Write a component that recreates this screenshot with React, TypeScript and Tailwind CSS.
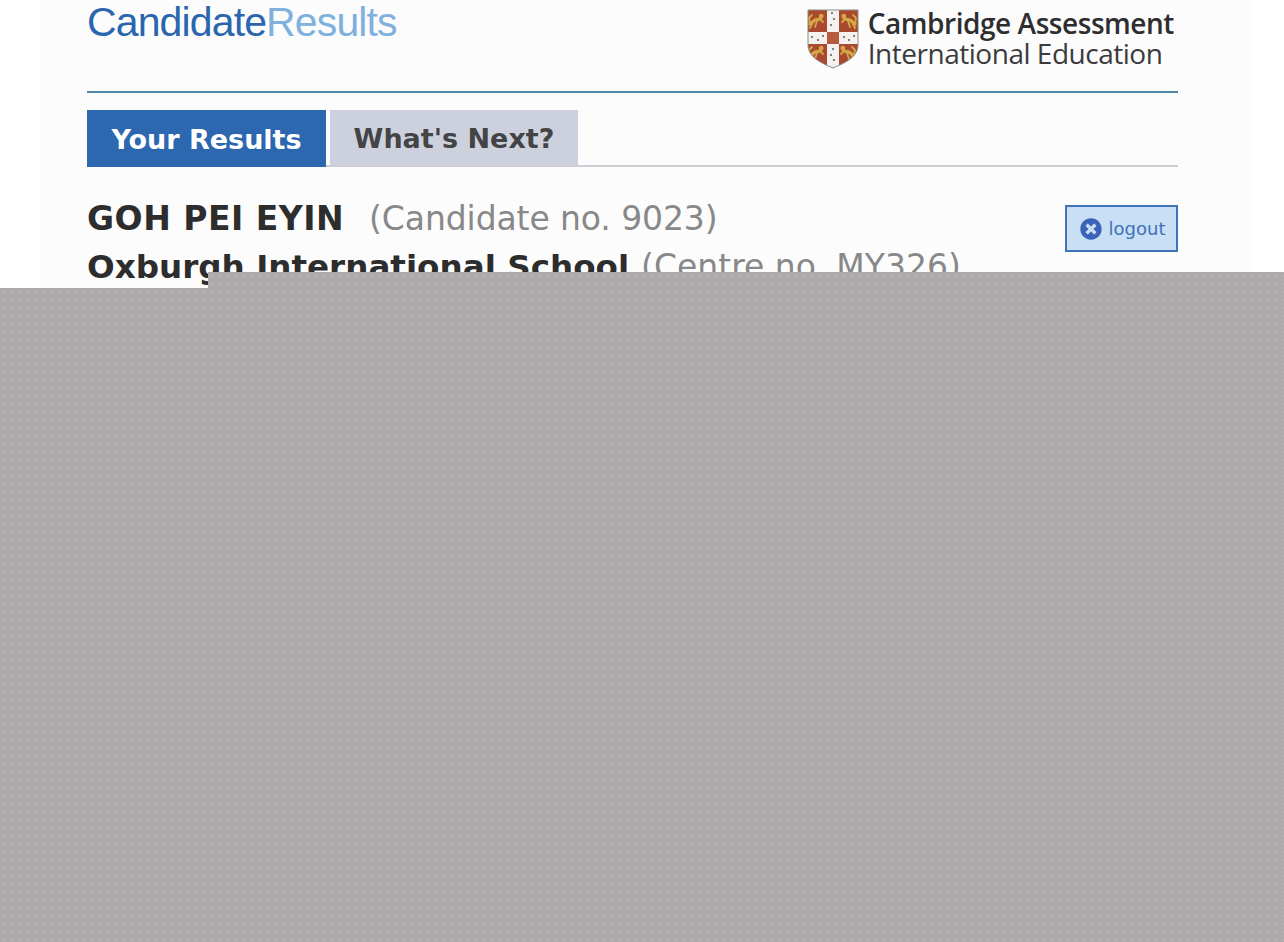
import React from "react";
import { FaTimesCircle } from "react-icons/fa";

function Lion({ x, y, flip }: { x: number; y: number; flip?: boolean }) {
  return (
    <g transform={`translate(${x} ${y}) ${flip ? "scale(-1 1)" : ""}`} fill="none" stroke="#d5aa45" strokeLinecap="round" strokeLinejoin="round">
      <path d="M-6 3 L-1 -1 L4 -2 L6 -5" strokeWidth="3.2" />
      <path d="M-4 3 L-6 7 M1 0 L-1 6 M4 -2 L7 1 M-6 3 L-7 -3 L-4 -6" strokeWidth="1.8" />
      <circle cx="5" cy="-5" r="2.2" fill="#d5aa45" stroke="none" />
    </g>
  );
}

function Shield() {
  return (
    <svg width="52" height="60" viewBox="0 0 52 60" className="shrink-0">
      <defs>
        <clipPath id="shield">
          <path d="M1 1 H51 V36 C51 48 38 54 26 59 C14 54 1 48 1 36 Z" />
        </clipPath>
      </defs>
      <g clipPath="url(#shield)">
        <rect width="52" height="60" fill="#a9492f" />
        <rect x="20" width="12" height="60" fill="#f4f1ee" />
        <rect y="23" width="52" height="12" fill="#f4f1ee" />
        <rect x="20" y="23" width="12" height="12" fill="#b85a3c" />
        {[[25, 4], [27, 10], [24, 16], [26, 40], [24, 46], [27, 51], [5, 28], [11, 31], [16, 27], [37, 28], [42, 31], [47, 27]].map(([x, y], i) => (
          <circle key={i} cx={x} cy={y} r="1" fill="#5a5a5a" />
        ))}
        <Lion x={9} y={12} />
        <Lion x={42} y={12} flip />
        <Lion x={9} y={44} />
        <Lion x={41} y={44} flip />
      </g>
      <path d="M1 1 H51 V36 C51 48 38 54 26 59 C14 54 1 48 1 36 Z" fill="none" stroke="#8d8d8d" strokeWidth="1" />
    </svg>
  );
}

const dots =
  "bg-[#acaaab] bg-[radial-gradient(circle,#bcbbbb_0.6px,transparent_1px)] bg-[length:8px_8px]";

export default function App() {
  return (
    <div className="relative h-[942px] overflow-hidden bg-white font-['DejaVu_Sans',sans-serif]">
      <div className="ml-[40px] mr-[32px] h-full bg-[#fcfcfd] pl-[47px] pr-[74px]">
        <header className="flex h-[93px] justify-between border-b-2 border-[#4f86a6]">
          <div className="font-['Liberation_Sans',sans-serif] text-[41px] leading-[44px] tracking-[-0.87px]">
            <span className="text-[#2a66ad]">Candidate</span>
            <span className="text-[#80b1dd]">Results</span>
          </div>
          <div className="mr-[4px] mt-[9px] flex items-start gap-[9px]">
            <Shield />
            <div className="mt-[-2px] font-['Open_Sans',sans-serif] text-[#2e2e30]">
              <div className="text-[28px] font-semibold leading-[32px] tracking-[-0.45px]">Cambridge Assessment</div>
              <div className="text-[28px] leading-[28px] tracking-[-0.48px] text-[#3b3b3d]">International Education</div>
            </div>
          </div>
        </header>

        <nav className="mt-[17px] flex h-[57px] gap-[4px] border-b-2 border-[#ccced2]">
          <div className="-mb-[2px] flex h-[57px] w-[239px] items-center justify-center bg-[#2c67b0] pt-[4px] text-[27px] font-bold text-white">
            Your Results
          </div>
          <div className="flex h-[55px] w-[248px] items-center justify-center bg-[#cdd1dd] pt-[4px] text-[27px] font-bold text-[#444446]">
            What's Next?
          </div>
        </nav>

        <section className="mt-[28px] flex items-start justify-between">
          <div>
            <div className="text-[33px] leading-[48px] text-[#888888]">
              <span className="font-bold tracking-[0.5px] text-[#2d2d2d]">GOH PEI EYIN</span>
              <span className="ml-[25px] tracking-[-0.1px]">(Candidate no. 9023)</span>
            </div>
            <div className="text-[33px] leading-[48px] text-[#888888]">
              <span className="text-[32.6px] font-bold text-[#2d2d2d]">Oxburgh International School</span>
              <span className="ml-[12px]">(Centre no. MY326)</span>
            </div>
          </div>
          <button className="mt-[10px] flex h-[47px] w-[113px] items-center justify-center gap-[7px] border-2 border-[#3f74b8] bg-[#c9dff5] pl-[2px] text-[18px] text-[#3f72b6]">
            <FaTimesCircle className="text-[22px] text-[#3d63b8]" />
            logout
          </button>
        </section>
      </div>

      <div className={`absolute bottom-0 left-[208px] right-0 top-[272px] ${dots}`} />
      <div className={`absolute bottom-0 left-0 top-[288px] w-[208px] ${dots}`} />
    </div>
  );
}
